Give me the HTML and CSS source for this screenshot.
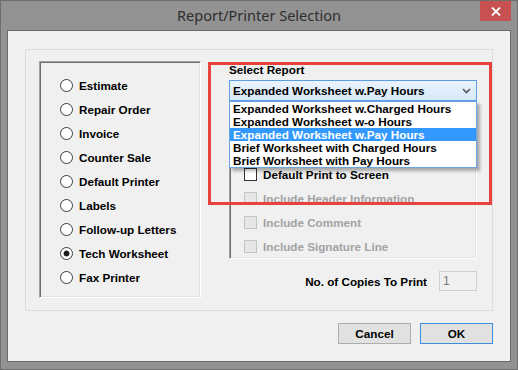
FILE: index.html
```html
<!DOCTYPE html>
<html>
<head>
    <title>Report/Printer Selection</title>
    <link rel="stylesheet" href="styles.css">
</head>
<body>
    <div class="window">
        <div class="titlebar">
            <span></span>
            <span class="title">Report/Printer Selection</span>
            <button class="close-btn" aria-label="Close">
                <svg width="10" height="9" viewBox="0 0 10 9">
                    <path d="M1 0.5 L9 8.5 M9 0.5 L1 8.5" stroke="#fff" stroke-width="1.8" fill="none"/>
                </svg>
            </button>
        </div>

        <div class="client">
            <div class="outer-group">
                <div class="report-type">
                    <label class="radio-row"><span class="radio"></span>Estimate</label>
                    <label class="radio-row"><span class="radio"></span>Repair Order</label>
                    <label class="radio-row"><span class="radio"></span>Invoice</label>
                    <label class="radio-row"><span class="radio"></span>Counter Sale</label>
                    <label class="radio-row"><span class="radio"></span>Default Printer</label>
                    <label class="radio-row"><span class="radio"></span>Labels</label>
                    <label class="radio-row"><span class="radio"></span>Follow-up Letters</label>
                    <label class="radio-row"><span class="radio checked"></span>Tech Worksheet</label>
                    <label class="radio-row"><span class="radio"></span>Fax Printer</label>
                </div>

                <div class="options">
                    <div class="select-label">Select Report</div>
                    <div class="combo">
                        <span class="combo-text">Expanded Worksheet w.Pay Hours</span>
                        <svg class="combo-arrow" width="9" height="6" viewBox="0 0 9 6">
                            <path d="M1 1 L4.5 4.5 L8 1" stroke="#555" stroke-width="1.6" fill="none"/>
                        </svg>
                        <ul class="drop-list">
                            <li>Expanded Worksheet w.Charged Hours</li>
                            <li>Expanded Worksheet w-o Hours</li>
                            <li class="selected">Expanded Worksheet w.Pay Hours</li>
                            <li>Brief Worksheet with Charged Hours</li>
                            <li>Brief Worksheet with Pay Hours</li>
                        </ul>
                    </div>

                    <div class="check-group">
                        <label class="check-row"><span class="check"></span>Default Print to Screen</label>
                        <label class="check-row disabled"><span class="check"></span>Include Header Information</label>
                        <label class="check-row disabled"><span class="check"></span>Include Comment</label>
                        <label class="check-row disabled"><span class="check"></span>Include Signature Line</label>
                    </div>

                    <div class="copies">
                        <span>No. of Copies To Print</span>
                        <div class="copies-input">1</div>
                    </div>
                </div>
            </div>

            <div class="buttons">
                <button class="btn">Cancel</button>
                <button class="btn default">OK</button>
            </div>

            <!-- annotation box drawn over the dialog -->
            <div class="highlight"></div>
        </div>
    </div>
</body>
</html>
```

FILE: styles.css
```css
body {
    margin: 0;
    font-family: "Liberation Sans", Arial, sans-serif;
    font-size: 11.7px;
    font-weight: bold;
    color: #000;
}
.window {
    width: 518px;
    height: 370px;
    box-sizing: border-box;
    border: 1px solid #6e6e6e;
    background: #929292;
}
.titlebar {
    height: 29px;
    display: grid;
    grid-template-columns: 1fr auto 1fr;
    align-items: start;
}
.title {
    font-family: "Noto Sans", "Open Sans", sans-serif;
    font-weight: normal;
    font-size: 14.5px;
    color: #2e2e2e;
    line-height: 29px;
}
.close-btn {
    justify-self: end;
    margin-right: 6px;
    width: 31px;
    height: 20px;
    border: none;
    padding: 0;
    background: #c75050;
    display: flex;
    align-items: center;
    justify-content: center;
}
.client {
    position: relative;
    margin: 0 6px;
    height: 332px;
    box-sizing: border-box;
    border: 1px solid #6a6a6a;
    background: #f0f0f0;
    padding: 18px 17px 0 17px;
}
.outer-group {
    display: flex;
    height: 262px;
    box-sizing: border-box;
    border: 1px solid #dcdcdc;
    padding: 11px 0 0 13px;
}
.report-type {
    width: 162px;
    height: 237px;
    box-sizing: border-box;
    border-style: solid;
    border-width: 1px;
    border-color: #a0a0a0 #fff #fff #a0a0a0;
    box-shadow: inset 1px 1px #6d6d6d, inset -1px -1px #e3e3e3;
    padding: 11px 0 0 20px;
}
.radio-row {
    display: flex;
    align-items: center;
    height: 24px;
    gap: 6px;
}
.radio {
    width: 13px;
    height: 13px;
    box-sizing: border-box;
    border: 1px solid #3c3c3c;
    border-radius: 50%;
    background: #fff;
}
.radio.checked {
    background: radial-gradient(circle, #1b1b1b 0, #1b1b1b 2.6px, #fff 3.3px);
}
.options {
    margin-left: 28px;
    width: 248px;
}
.select-label {
    line-height: 14px;
    margin-top: 2px;
}
.combo {
    position: relative;
    margin-top: 3px;
    height: 21px;
    box-sizing: border-box;
    border: 1px solid #5a9de2;
    background: linear-gradient(#eaf3fc, #d6e9fb);
    display: flex;
    align-items: center;
    padding-left: 3px;
}
.combo-text {
    flex: 1;
}
.combo-arrow {
    margin-right: 5px;
}
.drop-list {
    position: absolute;
    left: -1px;
    right: -1px;
    top: 20px;
    margin: 0;
    padding: 0;
    list-style: none;
    background: #fff;
    border: 1px solid #6aa6e4;
    box-shadow: 3px 3px 3px rgba(0, 0, 0, 0.3);
    z-index: 2;
}
.drop-list li {
    line-height: 13px;
    height: 13px;
    padding-left: 3px;
    white-space: nowrap;
}
.drop-list li.selected {
    background: #3399ff;
    color: #fff;
}
.check-group {
    margin-top: 49px;
    height: 109px;
    box-sizing: border-box;
    border-style: solid;
    border-width: 1px;
    border-color: #a0a0a0 #fff #fff #a0a0a0;
    box-shadow: inset 1px 1px #6d6d6d, inset -1px -1px #e3e3e3;
    padding: 11px 0 0 14px;
}
.check-row {
    display: flex;
    align-items: center;
    height: 24px;
    gap: 6px;
}
.check {
    width: 13px;
    height: 13px;
    box-sizing: border-box;
    border: 1px solid #333;
    background: #fff;
}
.check-row.disabled {
    color: #a3a3a3;
}
.check-row.disabled .check {
    border-color: #c4c4c4;
    background: #e6e6e6;
}
.copies {
    margin-top: 12px;
    display: flex;
    justify-content: flex-end;
    align-items: center;
    gap: 12px;
}
.copies-input {
    width: 38px;
    height: 20px;
    box-sizing: border-box;
    border: 1px solid #cfcfcf;
    background: #f0f0f0;
    color: #7a7a7a;
    font-weight: normal;
    font-size: 12px;
    line-height: 18px;
    padding-left: 3px;
}
.buttons {
    margin-top: 12px;
    display: flex;
    justify-content: flex-end;
    gap: 9px;
}
.btn {
    width: 73px;
    height: 21px;
    border: 1px solid #adadad;
    background: #e1e1e1;
    font-family: "Liberation Sans", Arial, sans-serif;
    font-size: 11.7px;
    font-weight: bold;
    color: #000;
    padding: 0;
}
.btn.default {
    border-color: #3c8ddc;
}
.highlight {
    position: absolute;
    left: 200px;
    top: 31px;
    width: 284px;
    height: 143px;
    box-sizing: border-box;
    border: 3px solid #e8423f;
    z-index: 3;
    pointer-events: none;
}
```
